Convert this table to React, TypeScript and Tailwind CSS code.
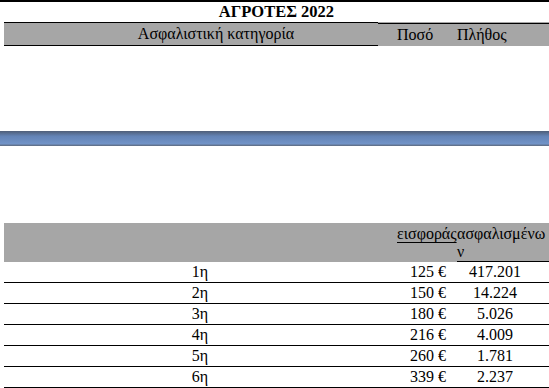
import React from "react"

const rows = [
  { cat: "1η", amount: "125 €", count: "417.201" },
  { cat: "2η", amount: "150 €", count: "14.224" },
  { cat: "3η", amount: "180 €", count: "5.026" },
  { cat: "4η", amount: "216 €", count: "4.009" },
  { cat: "5η", amount: "260 €", count: "1.781" },
  { cat: "6η", amount: "339 €", count: "2.237" },
]

export default function App() {
  return (
    <div className="w-[549px] h-[388px] overflow-hidden bg-white text-black text-[16px] font-['Liberation_Serif','Times_New_Roman',serif]">
      {/* Title */}
      <div className="h-[22px] border-t-2 border-black flex items-center justify-center pl-[4px] text-[16.5px] font-bold leading-[20px]">
        ΑΓΡΟΤΕΣ 2022
      </div>

      {/* Header row */}
      <div className="ml-[4px] grid grid-cols-[374px_79px_92px] h-[24px] bg-[#a6a6a6]">
        <div className="border-y border-black flex items-center justify-center pl-[50px] leading-[20px]">
          Ασφαλιστική κατηγορία
        </div>
        <div className="col-span-2 mt-[1px] border-t border-black grid grid-cols-[79px_92px] items-center leading-[20px]">
          <span className="pl-[19px]">Ποσό</span>
          <span>Πλήθος</span>
        </div>
      </div>

      <div className="h-[85px]" />

      {/* Blue separator */}
      <div className="h-[15px] bg-[linear-gradient(to_bottom,#4f5e78_0%,#6383b6_35%,#7193c7_85%,#5c687c_100%)]" />

      <div className="h-[77px]" />

      {/* Second header */}
      <div className="ml-[4px] grid grid-cols-[374px_79px_92px] h-[39px] bg-[#a6a6a6] leading-[18px]">
        <div />
        <div className="pt-[2px] pl-[19px]">
          <span className="underline decoration-1 underline-offset-[3px]">εισφοράς</span>
        </div>
        <div className="pt-[2px] border-b border-black whitespace-nowrap">
          ασφαλισμένω
          <br />
          ν
        </div>
      </div>

      {/* Data rows */}
      {rows.map((r) => (
        <div
          key={r.cat}
          className="ml-[4px] grid grid-cols-[374px_79px_92px] h-[21px] border-b border-black leading-[20px]"
        >
          <div className="flex justify-center pl-[18px]">{r.cat}</div>
          <div className="text-right pr-[11px]">{r.amount}</div>
          <div className="text-center pr-[16px]">{r.count}</div>
        </div>
      ))}
    </div>
  )
}
